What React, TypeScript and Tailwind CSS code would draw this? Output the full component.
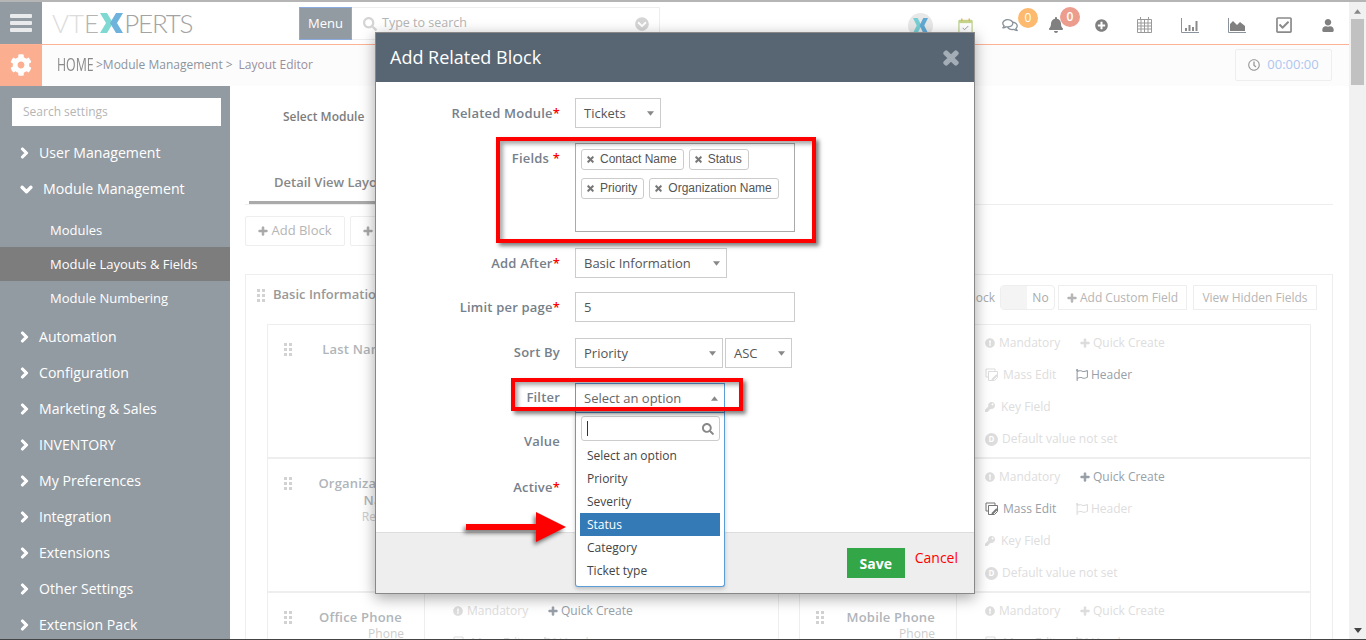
import React from 'react'
import {
  FaChevronCircleDown,
  FaChevronDown,
  FaChevronRight,
  FaCog,
  FaExclamationCircle,
  FaKey,
  FaPlus,
  FaPlusCircle,
  FaRegCheckSquare,
  FaRegClock,
  FaRegComments,
  FaRegFlag,
  FaBell,
  FaSearch,
  FaTimes,
  FaUser,
} from 'react-icons/fa'

const sidebarTop = ['Automation', 'Configuration', 'Marketing & Sales', 'INVENTORY', 'My Preferences', 'Integration', 'Extensions', 'Other Settings', 'Extension Pack']
const filterOptions = ['Select an option', 'Priority', 'Severity', 'Status', 'Category', 'Ticket type']

const NavItem = ({ label }: { label: string }) => (
  <div className="flex h-[36px] items-center pl-[20px] pt-[2px] text-[14.1px] text-white">
    <FaChevronRight className="mr-[10px] h-[12px] w-[9px] stroke-current stroke-[50]" />
    <span>{label}</span>
  </div>
)

const DragDots = () => (
  <div className="grid w-[8px] shrink-0 grid-cols-2 gap-[2px]">
    {Array.from({ length: 6 }).map((_, i) => (
      <div key={i} className="h-[3px] w-[3px] bg-[#d2d2d2]" />
    ))}
  </div>
)

const Caret = ({ up = false }: { up?: boolean }) => (
  <svg viewBox="0 0 8 5" className="h-[5px] w-[7px] shrink-0 fill-[#888]">
    <path d={up ? 'M4 0l4 5H0z' : 'M0 0h8L4 5z'} />
  </svg>
)

const SelectBox = ({ value, className }: { value: string; className: string }) => (
  <div className={`flex h-[30px] items-center justify-between border border-[#ccc] pl-[8px] pr-[6px] pt-px text-[13px] text-[#555] ${className}`}>
    <span>{value}</span>
    <Caret />
  </div>
)

const FormRow = ({ label, star, raised, children, className = '' }: { label: string; star?: boolean; raised?: boolean; children?: React.ReactNode; className?: string }) => (
  <div className={`flex ${className}`}>
    <div className={`flex h-[30px] w-[184px] shrink-0 items-center justify-end text-[13px] font-semibold tracking-[0.2px] text-[#76808a] ${raised ? '' : 'pt-[2px]'}`}>
      {label}
      {star && <span className="text-[#f00]">*</span>}
    </div>
    <div className="ml-[15px]">{children}</div>
  </div>
)

const Chip = ({ label }: { label: string }) => (
  <div className="flex h-[21px] items-center rounded-[3px] border border-[#ccc] bg-white pb-px pl-[5px] pr-[6px] font-['Liberation_Sans',sans-serif] text-[12px] text-[#555]">
    <FaTimes className="mr-[6px] h-[9px] w-[7px] stroke-current stroke-[40] text-[#777]" />
    {label}
  </div>
)

const MassEditIcon = ({ on }: { on: boolean }) => (
  <svg viewBox="0 0 14 14" className={`mr-[4px] h-[14px] w-[14px] fill-none ${on ? 'stroke-[#777]' : 'stroke-[#ddd]'}`}>
    <path d="M1 1h9v2M1 1v8h2M3.5 3.5h9v6l-3 3h-6z" />
    <path d="M7 12l5-5" strokeWidth="2" />
  </svg>
)

const FieldCell = ({ name, type, quick, mass, header, left }: { name: string; type: string; quick?: boolean; mass?: boolean; header?: boolean; left?: boolean }) => (
  <div className="flex h-full w-[512px] shrink-0 border-x border-[#eee]">
    <div className={`flex w-[157px] shrink-0 border-r border-[#eee] pl-[16px] pt-[16px] ${left ? 'pr-[20px]' : 'pr-[21px]'}`}>
      <div className="pt-[2px]">
        <DragDots />
      </div>
      <div className="flex-1 text-right">
        <div className={`text-[13px] font-semibold leading-[17px] tracking-[0.2px] text-[#b0b5ba] ${left ? 'pr-[2px]' : ''}`}>{name}</div>
        <div className="text-[12px] leading-[16px] text-[#ccc]">{type}</div>
      </div>
    </div>
    <div className="pl-[28px] pt-[2px] text-[12px] text-[#ddd]">
      <div className="flex h-[32px] items-center">
        <div className="flex w-[95px] items-center">
          <FaExclamationCircle className="mr-[4px] h-[10px] w-[10px]" />
          Mandatory
        </div>
        <div className={`flex items-center ${quick ? 'text-[#98a0a8]' : ''}`}>
          <FaPlus className="mr-[3px] h-[10px] w-[10px] stroke-current stroke-[30]" />
          Quick Create
        </div>
      </div>
      <div className="flex h-[32px] items-center">
        <div className={`flex w-[91px] items-center ${mass ? 'text-[#98a0a8]' : ''}`}>
          <MassEditIcon on={!!mass} />
          Mass Edit
        </div>
        <div className={`flex items-center ${header ? 'text-[#98a0a8]' : ''}`}>
          <FaRegFlag className="mr-[3px] h-[12px] w-[12px]" />
          Header
        </div>
      </div>
      <div className="flex h-[32px] items-center">
        <FaKey className="mr-[6px] h-[10px] w-[10px]" />
        Key Field
      </div>
      <div className="flex h-[32px] items-center">
        <div className="mr-[4px] flex h-[13px] w-[13px] items-center justify-center rounded-full bg-[#ddd] text-[8px] font-bold text-white">D</div>
        Default value not set
      </div>
    </div>
  </div>
)

const TopIcon = ({ className, children }: { className: string; children: React.ReactNode }) => (
  <div className={`relative flex shrink-0 items-center justify-center ${className}`}>{children}</div>
)

export default function App() {
  return (
    <div className="relative box-border flex h-[640px] w-[1366px] overflow-hidden border-t-2 border-b border-t-[#b5b5b5] border-b-[#444] bg-white font-['Open_Sans',sans-serif]">
      <div className="flex h-full w-[1349px] shrink-0 flex-col">
        {/* top bar */}
        <header className="flex h-[43px] shrink-0 items-start border-b border-[#fdb295]">
          <div className="flex h-[42px] w-[42px] flex-col items-center justify-center gap-[3px] bg-[#939ba2]">
            <div className="h-[4px] w-[22px] rounded-[1px] bg-[#e8eaec]" />
            <div className="h-[4px] w-[22px] rounded-[1px] bg-[#e8eaec]" />
            <div className="h-[4px] w-[22px] rounded-[1px] bg-[#e8eaec]" />
          </div>
          <div className="ml-[10px] flex h-[42px] w-[247px] items-center font-['Lato',sans-serif] text-[26px] font-light leading-none">
            <span className="text-[#dcdcdc]">VT</span>
            <span className="text-[#b4b4b4]">E</span>
            <svg viewBox="0 0 23 20" className="mx-px h-[20px] w-[23px]">
              <path d="M0 0h7l6 10-6 10H0l6-10z" fill="#7fd9d2" />
              <path d="M23 0h-7l-6 10 6 10h7l-6-10z" fill="#6db3dc" />
            </svg>
            <span className="tracking-[-1.2px] text-[#a3a3a3]">PERTS</span>
          </div>
          <div className="mt-[5px] flex h-[33px] w-[53px] items-center justify-center border border-[#8aabe0] bg-[#939ba2] pt-px text-[13px] text-white">Menu</div>
          <div className="mt-[5px] flex h-[33px] w-[308px] items-center border border-l-0 border-[#eee] pl-[11px] pr-[10px] text-[12.5px] text-[#b5b5b5]">
            <FaSearch className="mr-[5px] h-[14px] w-[14px] text-[#d5d5d5]" />
            <span className="flex-1">Type to search</span>
            <FaChevronCircleDown className="h-[14px] w-[14px] text-[#d5d5d5]" />
          </div>
          <div className="ml-[248px] flex h-[46px] items-center text-[#808080]">
            <TopIcon className="w-[25px]">
              <div className="flex h-[25px] w-[25px] items-center justify-center rounded-full bg-[#e8e8e8]">
                <svg viewBox="0 0 16 16" className="h-[15px] w-[15px]">
                  <path d="M0 0h5l4 8-4 8H0l4-8z" fill="#76cfd4" />
                  <path d="M16 0h-5L7 8l4 8h5l-4-8z" fill="#5fa9d4" />
                </svg>
              </div>
            </TopIcon>
            <TopIcon className="ml-[20px] w-[24px]">
              <svg viewBox="0 0 16 17" className="h-[17px] w-[15px] fill-none">
                <path d="M1 3h14v13H1z" stroke="#a9c46c" />
                <path d="M1 3h14v3H1z" fill="#c5d68a" />
                <path d="M4 1v3M12 1v3" stroke="#e3b25c" strokeWidth="1.5" />
                <path d="M5 11l2 2 4-4" stroke="#999" />
              </svg>
            </TopIcon>
            <TopIcon className="ml-[21px] w-[24px]">
              <FaRegComments className="h-[14px] w-[16px] text-[#8a939c]" />
              <div className="absolute -top-[10px] left-[20px] flex h-[20px] w-[20px] items-center justify-center rounded-full bg-[#fdb96d] text-[12px] text-white">0</div>
            </TopIcon>
            <TopIcon className="ml-[22px] w-[24px]">
              <FaBell className="h-[16px] w-[14px]" />
              <div className="absolute -top-[10px] left-[16px] flex h-[20px] w-[20px] items-center justify-center rounded-full bg-[#ec9d8e] text-[12px] font-semibold text-white">0</div>
            </TopIcon>
            <TopIcon className="ml-[21px] w-[24px]">
              <FaPlusCircle className="h-[13px] w-[13px]" />
            </TopIcon>
            <TopIcon className="ml-[19px] w-[24px]">
              <svg viewBox="0 0 15 16" className="h-[16px] w-[15px] fill-none stroke-[#999]">
                <path d="M.5 2.5h14v13H.5zM.5 6h14M.5 9h14M.5 12h14M4 2.5v13M7.5 2.5v13M11 2.5v13M3.5 0v3M11.5 0v3" />
              </svg>
            </TopIcon>
            <TopIcon className="ml-[22px] w-[24px]">
              <svg viewBox="0 0 18 15" className="h-[15px] w-[18px]">
                <path d="M.5 0v14.5H18" fill="none" stroke="#8a939c" />
                <path d="M4 10h2v3H4zM7.5 7h2v6h-2zM11 9h2v4h-2zM14.5 3h2v10h-2z" fill="#8a8a8a" />
              </svg>
            </TopIcon>
            <TopIcon className="ml-[23px] w-[24px]">
              <svg viewBox="0 0 18 15" className="h-[15px] w-[18px]">
                <path d="M.5 0v14.5H18" fill="none" stroke="#8a939c" />
                <path d="M2 13V6l3-3 4 4 3-3 5 4v5z" fill="#808080" />
              </svg>
            </TopIcon>
            <TopIcon className="ml-[23px] w-[24px]">
              <FaRegCheckSquare className="h-[18px] w-[18px] text-[#8a8a8a]" />
            </TopIcon>
            <TopIcon className="ml-[20px] w-[24px]">
              <FaUser className="h-[13px] w-[12px]" />
            </TopIcon>
          </div>
        </header>

        {/* breadcrumb bar */}
        <div className="flex h-[41px] shrink-0 items-center bg-[#fcfcfc] pr-[17px]">
          <div className="flex h-[41px] w-[42px] items-center justify-center bg-[#fcae90] pb-[2px]">
            <FaCog className="h-[22px] w-[22px] text-white" />
          </div>
          <div className="flex flex-1 items-center pb-[2px]">
            <span className="ml-[15px] w-[36px] origin-left scale-x-[0.65] whitespace-nowrap text-[19px] leading-none text-[#8a8a8a]">HOME</span>
            <span className="ml-[3px] text-[12px] text-[#8d949c]">&gt;Module Management</span>
            <span className="ml-[3px] text-[12px] text-[#8d949c]">&gt;</span>
            <span className="ml-[6px] text-[12px] text-[#9a8f9c]">Layout Editor</span>
            <div className="ml-auto flex h-[32px] w-[97px] items-center justify-center rounded-[2px] border border-[#eee] text-[13px] text-[#adc6ef]">
              <FaRegClock className="mr-[7px] h-[12px] w-[12px] text-[#999]" />
              00:00:00
            </div>
          </div>
        </div>

        <div className="flex min-h-0 flex-1">
          {/* settings sidebar */}
          <aside className="w-[230px] shrink-0 bg-[#939ba2] pt-[12px]">
            <div className="ml-[12px] mr-[9px] flex h-[28px] items-center bg-white pl-[11px] text-[12px] text-[#b5b5b5]">Search settings</div>
            <div className="mt-[8px]">
              <NavItem label="User Management" />
              <div className="flex h-[36px] items-center pl-[20px] pt-[2px] text-[14.2px] text-white">
                <FaChevronDown className="mr-[10px] h-[13px] w-[13px] stroke-current stroke-[50]" />
                <span>Module Management</span>
              </div>
            </div>
            <div className="mt-[7px] text-[13px] text-white">
              <div className="flex h-[34px] items-center pl-[50px] pt-[2px]">Modules</div>
              <div className="flex h-[34px] items-center bg-[#7d7d7d] pl-[50px] pt-[2px]">Module Layouts &amp; Fields</div>
              <div className="flex h-[34px] items-center pl-[50px] pt-[2px]">Module Numbering</div>
            </div>
            <div className="mt-[3px]">
              {sidebarTop.map((item) => (
                <NavItem key={item} label={item} />
              ))}
            </div>
          </aside>

          {/* layout editor page, faded behind the modal */}
          <main className="min-w-0 flex-1 pl-[15px] pr-[16px]">
            <div className="mt-[22px] pl-[38px] text-[12px] font-semibold leading-[18px] text-[#7d7d7d]">Select Module</div>
            <div className="mt-[47px] flex h-[32px] items-start border-b border-[#eee] pl-[4px]">
              <div className="h-[31px] w-[200px] whitespace-nowrap border-b-[3px] border-[#aaa] pl-[25px] text-[13px] font-semibold leading-[18px] text-[#888]">Detail View Layout</div>
            </div>
            <div className="mt-[11px] flex gap-[5px]">
              <div className="flex h-[30px] w-[100px] items-center justify-center rounded-[2px] border border-[#eee] text-[13px] text-[#b5b5b5]">
                <FaPlus className="mr-[3px] h-[10px] w-[10px] stroke-current stroke-[30] text-[#aaa]" />
                Add Block
              </div>
              <div className="flex h-[30px] w-[120px] items-center rounded-[2px] border border-[#eee] pl-[12px] text-[13px] text-[#b5b5b5]">
                <FaPlus className="mr-[3px] h-[10px] w-[10px] stroke-current stroke-[30] text-[#aaa]" />
                Add Field
              </div>
            </div>
            <section className="mt-[28px] h-[400px] border border-b-0 border-[#eee]">
              <div className="flex h-[49px] items-start pl-[11px] pr-[15px] pt-[10px]">
                <div className="pt-[4px]">
                  <DragDots />
                </div>
                <span className="ml-[8px] text-[13px] font-semibold leading-[18px] text-[#999]">Basic Information</span>
                <span className="ml-auto text-[12px] leading-[25px] text-[#aaa]">Collapse Block</span>
                <div className="ml-[5px] flex h-[25px] w-[55px] rounded-[4px] border border-[#eee] text-[12px] text-[#aaa]">
                  <div className="w-[26px] bg-[#f4f4f4]" />
                  <div className="flex flex-1 items-center justify-center">No</div>
                </div>
                <div className="ml-[3px] flex h-[25px] w-[129px] items-center justify-center border border-[#eee] text-[12px] text-[#b5b5b5]">
                  <FaPlus className="mr-[3px] h-[10px] w-[10px] stroke-current stroke-[30]" />
                  Add Custom Field
                </div>
                <div className="ml-[6px] flex h-[25px] w-[124px] items-center justify-center border border-[#eee] text-[12px] text-[#b5b5b5]">View Hidden Fields</div>
              </div>
              <div className="mx-[21px] border-t border-[#eee]">
                <div className="flex h-[134px] gap-[20px] border-b-2 border-[#eee]">
                  <FieldCell left name="Last Name *" type="" header />
                  <FieldCell name="First Name" type="" header />
                </div>
                <div className="flex h-[134px] gap-[20px] border-b-2 border-[#eee]">
                  <FieldCell left name="Organization Name" type="Related" quick mass />
                  <FieldCell name="Primary Email" type="Email" quick mass />
                </div>
                <div className="flex h-[134px] gap-[20px]">
                  <FieldCell left name="Office Phone" type="Phone" quick />
                  <FieldCell name="Mobile Phone" type="Phone" />
                </div>
              </div>
            </section>
          </main>
        </div>
      </div>

      {/* browser scrollbar */}
      <div className="flex h-full w-[17px] shrink-0 flex-col items-center bg-[#f1f1f1] pt-[7px]">
        <Caret up />
        <div className="mt-[5px] h-[66px] w-[13px] bg-[#c1c1c1]" />
        <div className="mt-auto mb-[6px]">
          <svg viewBox="0 0 8 5" className="h-[5px] w-[8px] fill-[#444]">
            <path d="M0 0h8L4 5z" />
          </svg>
        </div>
      </div>

      {/* Add Related Block modal */}
      <div className="absolute left-[375px] top-[30px] flex h-[562px] w-[600px] flex-col border border-[#888] bg-white shadow-[0_4px_14px_rgba(0,0,0,0.35)]">
        <div className="flex h-[49px] shrink-0 items-center justify-between bg-[#586673] pl-[14px] pr-[15px]">
          <h2 className="text-[18px] text-white">Add Related Block</h2>
          <FaTimes className="h-[20px] w-[16px] stroke-current stroke-[40] text-[#a4aeb6]" />
        </div>
        <div className="flex-1 pt-[16px]">
          <FormRow label="Related Module" star>
            <SelectBox value="Tickets" className="w-[86px]" />
          </FormRow>
          <div className="mt-[15px] flex">
            <div className="w-[184px] shrink-0 pt-[6px] text-right text-[13px] font-semibold leading-[18px] tracking-[0.2px] text-[#76808a]">
              Fields <span className="text-[#f00]">*</span>
            </div>
            <div className="ml-[15px] h-[89px] w-[220px] border border-[#aaa] pl-[5px] pt-[5px]">
              <div className="flex gap-[5px]">
                <Chip label="Contact Name" />
                <Chip label="Status" />
              </div>
              <div className="mt-[8px] flex gap-[5px]">
                <Chip label="Priority" />
                <Chip label="Organization Name" />
              </div>
            </div>
          </div>
          <FormRow label="Add After" star className="mt-[16px]">
            <SelectBox value="Basic Information" className="w-[152px]" />
          </FormRow>
          <FormRow label="Limit per page" star className="mt-[14px]">
            <div className="flex h-[30px] w-[220px] items-center border border-[#ccc] pl-[8px] pt-px text-[13px] text-[#555]">5</div>
          </FormRow>
          <FormRow label="Sort By" raised className="mt-[16px]">
            <div className="flex gap-[2px]">
              <SelectBox value="Priority" className="w-[148px]" />
              <SelectBox value="ASC" className="w-[67px]" />
            </div>
          </FormRow>
          <FormRow label="Filter" raised className="mt-[15px]">
            <div className="flex h-[30px] w-[150px] items-center justify-between border border-[#5b9dd9] pl-[8px] pr-[6px] pt-px text-[13px] text-[#666]">
              <span>Select an option</span>
              <Caret up />
            </div>
          </FormRow>
          <FormRow label="Value" className="mt-[13px]" />
          <FormRow label="Active" star className="mt-[16px]" />
        </div>
        <div className="flex h-[61px] shrink-0 items-start justify-end border-t border-[#ddd] bg-[#eee] pr-[16px] pt-[15px]">
          <div className="flex h-[30px] w-[58px] items-center justify-center bg-[#33a648] text-[14px] font-bold text-white">Save</div>
          <div className="ml-[10px] text-[14px] leading-[20px] text-[#f00]">Cancel</div>
        </div>

        {/* open filter dropdown */}
        <div className="absolute left-[199px] top-[380px] h-[174px] w-[150px] rounded-b-[3px] border border-t-0 border-[#5b9dd9] bg-white px-[4px] shadow-[0_2px_4px_rgba(0,0,0,0.2)]">
          <div className="ml-px mt-[3px] flex h-[25px] items-center justify-between rounded-[3px] border border-[#ccc] pl-[5px] pr-[5px]">
            <div className="h-[15px] w-px bg-[#333]" />
            <FaSearch className="h-[12px] w-[12px] text-[#888]" />
          </div>
          <div className="mt-[3px] text-[12px] text-[#444]">
            {filterOptions.map((opt) => (
              <div key={opt} className={`flex h-[23px] items-center pl-[7px] ${opt === 'Status' ? 'bg-[#337ab7] font-medium text-white' : ''}`}>
                {opt}
              </div>
            ))}
          </div>
        </div>

        {/* red annotations */}
        <div className="pointer-events-none absolute left-[120px] top-[104px] h-[106px] w-[320px] border-[4px] border-[#f00] shadow-[3px_3px_4px_rgba(0,0,0,0.5),inset_3px_3px_4px_rgba(0,0,0,0.35)]" />
        <div className="pointer-events-none absolute left-[135px] top-[345px] h-[33px] w-[232px] border-[4px] border-[#f00] shadow-[3px_3px_4px_rgba(0,0,0,0.5),inset_3px_3px_4px_rgba(0,0,0,0.35)]" />
        <svg viewBox="0 0 100 30" className="absolute left-[90px] top-[479px] h-[30px] w-[100px] overflow-visible drop-shadow-[-2px_3px_2px_rgba(0,0,0,0.55)]">
          <path d="M0 12h70V0l30 15-30 15V18H0z" fill="#f00" />
        </svg>
      </div>
    </div>
  )
}
